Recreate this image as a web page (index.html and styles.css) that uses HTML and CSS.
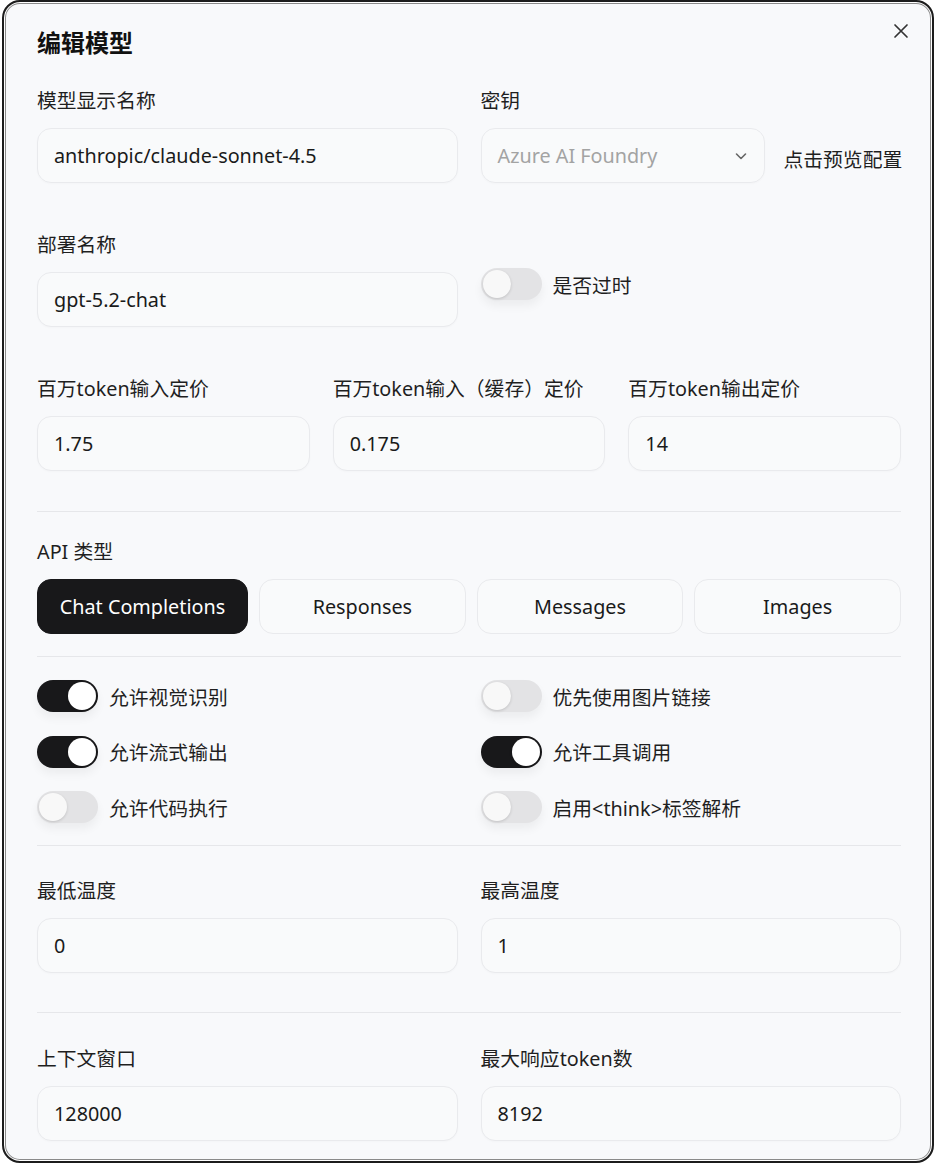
FILE: index.html
```html
<!DOCTYPE html>
<html lang="zh-CN">
<head>
<meta charset="utf-8">
<title>编辑模型</title>
<link rel="stylesheet" href="styles.css">
</head>
<body>
<div class="dialog">
  <div class="header">
    <h1 class="title">编辑模型</h1>
    <button class="close" aria-label="关闭">
      <svg width="16" height="16" viewBox="0 0 16 16"><path d="M2 2 L14 14 M14 2 L2 14" stroke="#333" stroke-width="1.7" stroke-linecap="round" fill="none"/></svg>
    </button>
  </div>

  <div class="grid2 row-first">
    <div class="field">
      <label class="label">模型显示名称</label>
      <div class="input">anthropic/claude-sonnet-4.5</div>
    </div>
    <div class="field">
      <label class="label">密钥</label>
      <div class="select-row">
        <div class="input select">
          <span class="placeholder">Azure AI Foundry</span>
          <svg width="14" height="14" viewBox="0 0 14 14"><path d="M2.5 5 L7 9.5 L11.5 5" stroke="#666" stroke-width="1.6" fill="none" stroke-linecap="round" stroke-linejoin="round"/></svg>
        </div>
        <span class="link">点击预览配置</span>
      </div>
    </div>
  </div>

  <div class="grid2 row-gap">
    <div class="field">
      <label class="label">部署名称</label>
      <div class="input">gpt-5.2-chat</div>
    </div>
    <div class="field deprecated">
      <div class="toggle-item">
        <span class="toggle"></span><span class="toggle-text">是否过时</span>
      </div>
    </div>
  </div>

  <div class="grid3 row-gap">
    <div class="field">
      <label class="label">百万token输入定价</label>
      <div class="input">1.75</div>
    </div>
    <div class="field">
      <label class="label">百万token输入（缓存）定价</label>
      <div class="input">0.175</div>
    </div>
    <div class="field">
      <label class="label">百万token输出定价</label>
      <div class="input">14</div>
    </div>
  </div>

  <hr class="divider d1">

  <div class="field">
    <label class="label">API 类型</label>
    <div class="seg">
      <button class="seg-btn active">Chat Completions</button>
      <button class="seg-btn">Responses</button>
      <button class="seg-btn">Messages</button>
      <button class="seg-btn">Images</button>
    </div>
  </div>

  <hr class="divider d2">

  <div class="toggles">
    <div class="toggle-item"><span class="toggle on"></span><span class="toggle-text">允许视觉识别</span></div>
    <div class="toggle-item"><span class="toggle"></span><span class="toggle-text">优先使用图片链接</span></div>
    <div class="toggle-item"><span class="toggle on"></span><span class="toggle-text">允许流式输出</span></div>
    <div class="toggle-item"><span class="toggle on"></span><span class="toggle-text">允许工具调用</span></div>
    <div class="toggle-item"><span class="toggle"></span><span class="toggle-text">允许代码执行</span></div>
    <div class="toggle-item"><span class="toggle"></span><span class="toggle-text">启用&lt;think&gt;标签解析</span></div>
  </div>

  <hr class="divider d3">

  <div class="grid2 temp">
    <div class="field">
      <label class="label">最低温度</label>
      <div class="input">0</div>
    </div>
    <div class="field">
      <label class="label">最高温度</label>
      <div class="input">1</div>
    </div>
  </div>

  <hr class="divider d4">

  <div class="grid2 ctx">
    <div class="field">
      <label class="label">上下文窗口</label>
      <div class="input">128000</div>
    </div>
    <div class="field">
      <label class="label">最大响应token数</label>
      <div class="input">8192</div>
    </div>
  </div>
</div>
</body>
</html>
```

FILE: styles.css
```css
* { box-sizing: border-box; }
html, body { margin: 0; padding: 0; background: #ffffff; }
body {
  font-family: "Noto Sans", "Noto Sans CJK SC", sans-serif;
  color: #1a1a1a;
}
.dialog {
  width: 932px;
  height: 1163px;
  margin: 0 2px;
  background: #f8f9fb;
  border: 2px solid #1c1c1c;
  border-radius: 18px;
  box-shadow: inset 0 0 0 1px #ffffff, inset 0 0 0 2px #8a8a8a;
  padding: 25px 31px 0 33px;
  overflow: hidden;
}
.header {
  display: flex;
  justify-content: space-between;
  align-items: flex-start;
  height: 32px;
}
.title {
  margin: 0;
  font-size: 24px;
  line-height: 32px;
  font-weight: 700;
  color: #111;
}
.close {
  border: 0;
  background: none;
  padding: 0;
  margin: -4px -8px 0 0;
  width: 16px;
  height: 16px;
  display: flex;
}
.label {
  display: block;
  font-size: 19.8px;
  line-height: 26px;
  height: 26px;
  color: #1f1f1f;
  margin-bottom: 14px;
  white-space: nowrap;
}
.input {
  height: 55px;
  border: 1px solid #e9eaed;
  border-radius: 14px;
  background: #f9fafb;
  padding: 0 16px;
  display: flex;
  align-items: center;
  font-size: 19.8px;
  color: #1a1a1a;
  box-shadow: 0 1px 2px rgba(0,0,0,0.02);
}
.grid2 {
  display: grid;
  grid-template-columns: minmax(0, 1fr) minmax(0, 1fr);
  column-gap: 23px;
}
.grid3 {
  display: grid;
  grid-template-columns: minmax(0, 1fr) minmax(0, 1fr) minmax(0, 1fr);
  column-gap: 23px;
}
.row-first { margin-top: 29px; }
.row-gap { margin-top: 49px; }
.select-row {
  display: flex;
  align-items: center;
  gap: 19px;
}
.select {
  flex: 0 0 284px;
  justify-content: space-between;
  padding-right: 16px;
}
.placeholder { color: #a3a3a3; }
.link {
  font-size: 19.8px;
  color: #1f1f1f;
  white-space: nowrap;
  margin-top: 6px;
}
.deprecated { padding-top: 36px; }
.divider {
  border: 0;
  border-top: 1px solid #e6e7ea;
  margin: 0;
  height: 0;
}
.d1 { margin-top: 40px; margin-bottom: 27px; }
.d2 { margin-top: 22px; margin-bottom: 23px; }
.d3 { margin-top: 22px; }
.d4 { margin-top: 39px; }
.temp { margin-top: 32px; }
.ctx { margin-top: 33px; }
.seg {
  display: grid;
  grid-template-columns: 211px 1fr 1fr 1fr;
  column-gap: 11px;
}
.seg-btn {
  height: 55px;
  border-radius: 14px;
  border: 1px solid #e9eaed;
  background: #f9fafb;
  font-family: inherit;
  font-size: 19.8px;
  color: #1a1a1a;
  padding: 0;
}
.seg-btn.active {
  background: #18181a;
  border-color: #18181a;
  color: #ffffff;
}
.toggles {
  display: grid;
  grid-template-columns: minmax(0, 1fr) minmax(0, 1fr);
  column-gap: 23px;
  row-gap: 23.5px;
}
.toggle-item {
  display: flex;
  align-items: center;
  gap: 11px;
  height: 32px;
}
.toggle {
  position: relative;
  width: 61px;
  height: 32px;
  border-radius: 16px;
  background: #e3e3e5;
  flex: 0 0 auto;
  box-shadow: 0 6px 10px rgba(0,0,0,0.05);
}
.toggle::after {
  content: "";
  position: absolute;
  top: 2px;
  left: 2px;
  width: 28px;
  height: 28px;
  border-radius: 50%;
  background: #f8f8f8;
  box-shadow: 0 1px 3px rgba(0,0,0,0.15);
}
.toggle.on { background: #18181a; }
.toggle.on::after {
  left: 31px;
  background: #ffffff;
}
.toggle-text {
  font-size: 19.8px;
  color: #1f1f1f;
  white-space: nowrap;
}
```
